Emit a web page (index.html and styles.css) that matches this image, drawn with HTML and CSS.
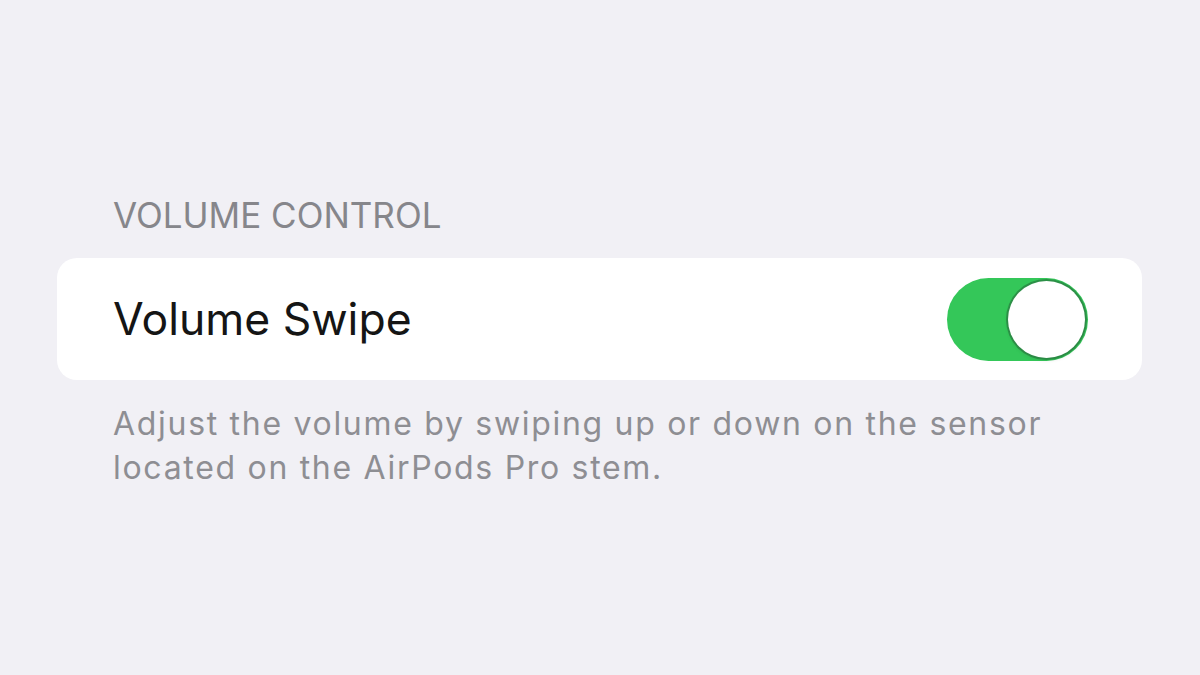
FILE: index.html
```html
<!DOCTYPE html>
<html lang="en">
<head>
  <meta charset="UTF-8" />
  <title>Volume Control</title>
  <meta name="viewport" content="width=device-width, initial-scale=1.0" />
  <link rel="stylesheet" href="styles.css">
</head>
<body>
  <div class="ajustes">
    <div class="seccion-titulo">VOLUME CONTROL</div>

    <div class="tarjeta">
      <div class="fila">
        <span class="fila-texto">Volume Swipe</span>
        <div class="interruptor activo">
          <div class="perilla"></div>
        </div>
      </div>
    </div>

    <p class="seccion-pie">Adjust the volume by swiping up or down on the sensor located on the AirPods Pro stem.</p>
  </div>
</body>
</html>
```

FILE: styles.css
```css
body {
  margin: 0;
  background: #f1f0f5;
  font-family: Inter, 'Liberation Sans', sans-serif;
  color: #111;
}

.ajustes {
  display: flex;
  flex-direction: column;
  padding: 194px 58px 0 57px;
}

.seccion-titulo {
  font-size: 35px;
  line-height: 42px;
  color: #86868b;
  padding-left: 56px;
  margin-bottom: 22px;
}

.tarjeta {
  background: #fff;
  border-radius: 20px;
  height: 122px;
  display: flex;
  align-items: center;
  padding: 0 54px 0 56px;
}

.fila {
  flex: 1;
  display: flex;
  align-items: center;
  justify-content: space-between;
}

.fila-texto {
  font-size: 44.5px;
  color: #151515;
}

.interruptor {
  width: 141px;
  height: 83px;
  border-radius: 42px;
  background: #e5e5ea;
  display: flex;
  align-items: center;
  padding: 0 3px;
  box-sizing: border-box;
}

.interruptor.activo {
  background: #34c759;
  justify-content: flex-end;
}

.perilla {
  width: 77px;
  height: 77px;
  border-radius: 50%;
  background: #fff;
  box-shadow: 0 0 0 2px rgba(40, 110, 60, 0.6), 0 2px 4px rgba(0, 0, 0, 0.12);
}

.seccion-pie {
  margin: 22px 0 0;
  padding-left: 56px;
  font-size: 32px;
  line-height: 44px;
  letter-spacing: 1.7px;
  color: #8e8e93;
}
```
